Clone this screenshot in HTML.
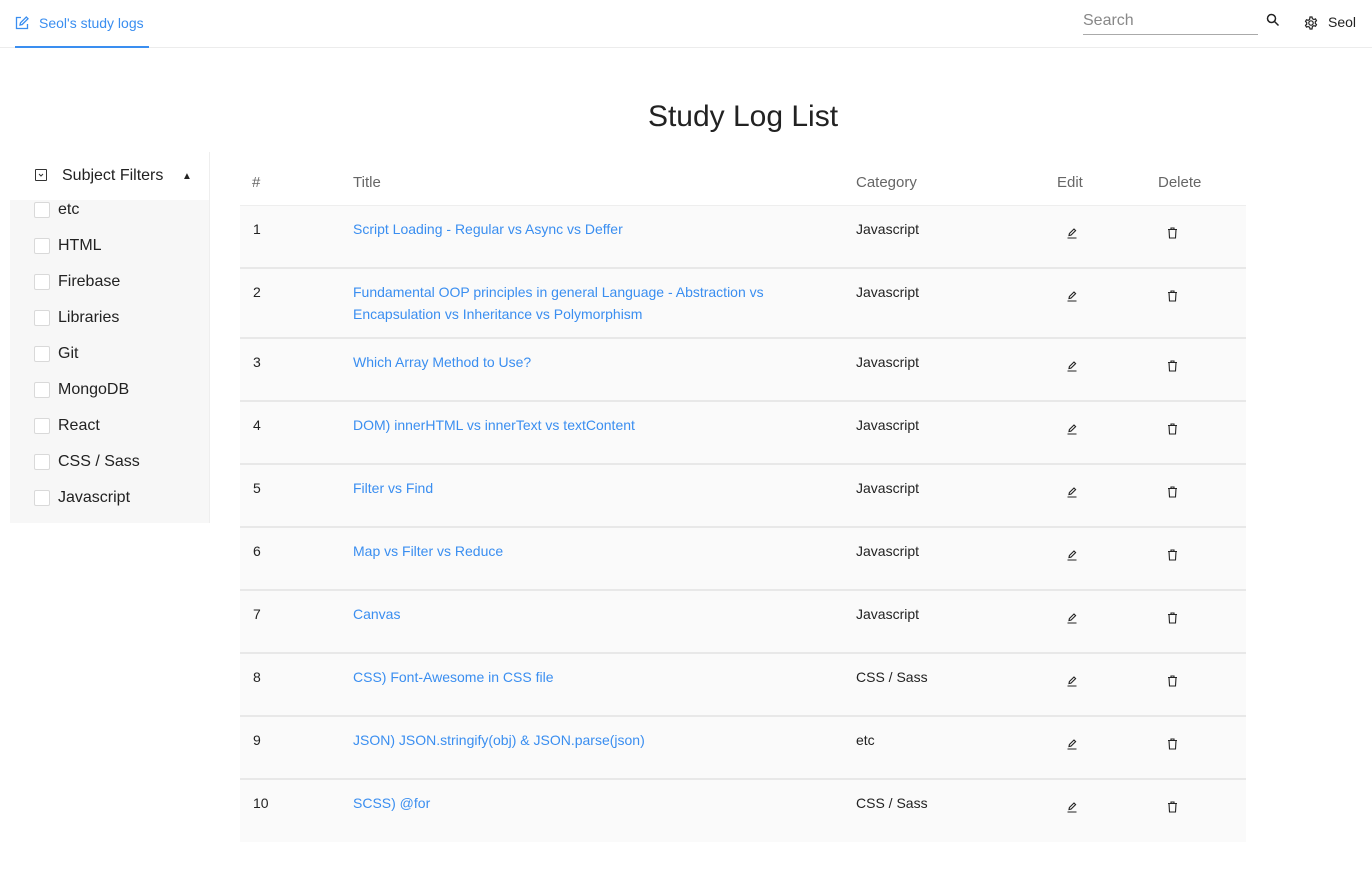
<!DOCTYPE html>
<html><head><meta charset="utf-8"><style>
*{box-sizing:border-box;margin:0;padding:0}
body{width:1372px;height:877px;background:#fff;font-family:"Liberation Sans",Helvetica,Arial,sans-serif;color:#222;position:relative;overflow:hidden}
.hdr{position:absolute;left:0;top:0;width:1372px;height:48px;border-bottom:1px solid #ececec}
.brand{position:absolute;left:15px;top:0;height:48px;width:134px;border-bottom:2px solid #3a8ef0;color:#3a8ef0;font-size:14px;line-height:46px;padding-left:24px}
.brand svg{position:absolute;left:0;top:16px}
.search{position:absolute;left:1083px;top:9px;width:175px;height:26px;border-bottom:1px solid #aaa;color:#888;font-size:16px;line-height:24px}
.sicon{position:absolute;left:1266px;top:13px}
.gear{position:absolute;left:1304px;top:16px}
.user{position:absolute;left:1328px;top:14px;font-size:14px}
h1{position:absolute;left:0;width:1486px;top:100px;text-align:center;font-size:30px;font-weight:normal;color:#222}
.side{position:absolute;left:10px;top:152px;width:200px;height:371px;border-right:1px solid #eee}
.sh{height:48px;position:relative;font-size:16px;line-height:48px;padding-left:52px;background:#fff}
.sh .bx{position:absolute;left:25px;top:17px;width:12px;height:12px;border:1px solid #333;border-radius:1px}
.sh .car{position:absolute;left:172px;top:1px;font-size:10px}
.list{background:#f7f7f7;height:323px;padding-top:0}
.it{height:36px;position:relative;font-size:16px;line-height:20px;padding-left:48px}
.it span.c{position:absolute;left:24px;top:2px;width:16px;height:16px;border:1px solid #d9d9d9;border-radius:2px;background:#fff}
table{position:absolute;left:240px;top:160px;width:1006px;border-collapse:collapse;font-size:14px}
th{text-align:left;font-weight:normal;color:#666;font-size:15px;height:45px;border-bottom:1px solid #eee;padding:0}
td{vertical-align:top;padding:12px 0 0 0;background:#fafafa;border-bottom:2px solid #e8e8e8;line-height:22px}
td.a{color:#3a8ef0}
tr.r td{height:63px}
tr.r2 td{height:70px}
svg.ic{margin-top:9px}
</style></head><body>
<div class="hdr">
<div class="brand"><svg width="14" height="14" viewBox="0 0 14 14" fill="none" stroke="#3a8ef0" stroke-width="1.3"><path d="M6 1.5H1.5v11h11V8"/><path d="M5 9l.5-2.2L11.3 1l1.7 1.7-5.8 5.8z"/></svg>Seol's study logs</div>
<div class="search">Search</div>
<svg class="sicon" width="14" height="14" viewBox="0 0 14 14" fill="none" stroke="#222" stroke-width="1.5"><circle cx="5.5" cy="5.5" r="4"/><path d="M8.5 8.5l4 4"/></svg>
<svg class="gear" width="14" height="14" viewBox="0 0 14 14" fill="none" stroke="#222" stroke-width="1.2"><circle cx="7" cy="7" r="2.2"/><path d="M6 1h2l.4 1.7 1.5.8 1.6-.6 1 1.7-1.2 1.2v1.6l1.2 1.2-1 1.7-1.6-.6-1.5.8L8 13H6l-.4-1.7-1.5-.8-1.6.6-1-1.7 1.2-1.2V6.6L1.5 5.4l1-1.7 1.6.6 1.5-.8z"/></svg>
<div class="user">Seol</div>
</div>
<h1>Study Log List</h1>
<div class="side">
<div class="sh"><span class="bx"><svg width="10" height="10" viewBox="0 0 10 10" style="position:absolute;left:0;top:0" fill="none" stroke="#333" stroke-width="1"><path d="M3 4l2 2 2-2"/></svg></span>Subject Filters<span class="car">&#9650;</span></div>
<div class="list">
<div class="it"><span class="c"></span>etc</div>
<div class="it"><span class="c"></span>HTML</div>
<div class="it"><span class="c"></span>Firebase</div>
<div class="it"><span class="c"></span>Libraries</div>
<div class="it"><span class="c"></span>Git</div>
<div class="it"><span class="c"></span>MongoDB</div>
<div class="it"><span class="c"></span>React</div>
<div class="it"><span class="c"></span>CSS / Sass</div>
<div class="it"><span class="c"></span>Javascript</div>
</div></div>
<table>
<colgroup><col style="width:113px"><col style="width:503px"><col style="width:201px"><col style="width:101px"><col style="width:88px"></colgroup>
<tr><th style="padding-left:12px">#</th><th>Title</th><th>Category</th><th>Edit</th><th>Delete</th></tr>
<tr class="r"><td style="padding-left:13px">1</td><td class="a">Script Loading - Regular vs Async vs Deffer</td><td>Javascript</td><td style="padding-left:9px"><svg class="ic" width="12" height="12" viewBox="0 0 12 12" fill="none" stroke="#222" stroke-width="1.1"><path d="M3 8.5l.4-2L8 2l1.6 1.6L5 8.1zM1.5 11h9"/></svg></td><td style="padding-left:9px"><svg class="ic" width="11" height="12" viewBox="0 0 11 12" fill="none" stroke="#222" stroke-width="1.1"><path d="M1 2.5h9M4 2.5V1h3v1.5M2 2.5l.5 8.5h6L9 2.5"/></svg></td></tr>
<tr class="r2"><td style="padding-left:13px">2</td><td class="a">Fundamental OOP principles in general Language - Abstraction vs<br>Encapsulation vs Inheritance vs Polymorphism</td><td>Javascript</td><td style="padding-left:9px"><svg class="ic" width="12" height="12" viewBox="0 0 12 12" fill="none" stroke="#222" stroke-width="1.1"><path d="M3 8.5l.4-2L8 2l1.6 1.6L5 8.1zM1.5 11h9"/></svg></td><td style="padding-left:9px"><svg class="ic" width="11" height="12" viewBox="0 0 11 12" fill="none" stroke="#222" stroke-width="1.1"><path d="M1 2.5h9M4 2.5V1h3v1.5M2 2.5l.5 8.5h6L9 2.5"/></svg></td></tr>
<tr class="r"><td style="padding-left:13px">3</td><td class="a">Which Array Method to Use?</td><td>Javascript</td><td style="padding-left:9px"><svg class="ic" width="12" height="12" viewBox="0 0 12 12" fill="none" stroke="#222" stroke-width="1.1"><path d="M3 8.5l.4-2L8 2l1.6 1.6L5 8.1zM1.5 11h9"/></svg></td><td style="padding-left:9px"><svg class="ic" width="11" height="12" viewBox="0 0 11 12" fill="none" stroke="#222" stroke-width="1.1"><path d="M1 2.5h9M4 2.5V1h3v1.5M2 2.5l.5 8.5h6L9 2.5"/></svg></td></tr>
<tr class="r"><td style="padding-left:13px">4</td><td class="a">DOM) innerHTML vs innerText vs textContent</td><td>Javascript</td><td style="padding-left:9px"><svg class="ic" width="12" height="12" viewBox="0 0 12 12" fill="none" stroke="#222" stroke-width="1.1"><path d="M3 8.5l.4-2L8 2l1.6 1.6L5 8.1zM1.5 11h9"/></svg></td><td style="padding-left:9px"><svg class="ic" width="11" height="12" viewBox="0 0 11 12" fill="none" stroke="#222" stroke-width="1.1"><path d="M1 2.5h9M4 2.5V1h3v1.5M2 2.5l.5 8.5h6L9 2.5"/></svg></td></tr>
<tr class="r"><td style="padding-left:13px">5</td><td class="a">Filter vs Find</td><td>Javascript</td><td style="padding-left:9px"><svg class="ic" width="12" height="12" viewBox="0 0 12 12" fill="none" stroke="#222" stroke-width="1.1"><path d="M3 8.5l.4-2L8 2l1.6 1.6L5 8.1zM1.5 11h9"/></svg></td><td style="padding-left:9px"><svg class="ic" width="11" height="12" viewBox="0 0 11 12" fill="none" stroke="#222" stroke-width="1.1"><path d="M1 2.5h9M4 2.5V1h3v1.5M2 2.5l.5 8.5h6L9 2.5"/></svg></td></tr>
<tr class="r"><td style="padding-left:13px">6</td><td class="a">Map vs Filter vs Reduce</td><td>Javascript</td><td style="padding-left:9px"><svg class="ic" width="12" height="12" viewBox="0 0 12 12" fill="none" stroke="#222" stroke-width="1.1"><path d="M3 8.5l.4-2L8 2l1.6 1.6L5 8.1zM1.5 11h9"/></svg></td><td style="padding-left:9px"><svg class="ic" width="11" height="12" viewBox="0 0 11 12" fill="none" stroke="#222" stroke-width="1.1"><path d="M1 2.5h9M4 2.5V1h3v1.5M2 2.5l.5 8.5h6L9 2.5"/></svg></td></tr>
<tr class="r"><td style="padding-left:13px">7</td><td class="a">Canvas</td><td>Javascript</td><td style="padding-left:9px"><svg class="ic" width="12" height="12" viewBox="0 0 12 12" fill="none" stroke="#222" stroke-width="1.1"><path d="M3 8.5l.4-2L8 2l1.6 1.6L5 8.1zM1.5 11h9"/></svg></td><td style="padding-left:9px"><svg class="ic" width="11" height="12" viewBox="0 0 11 12" fill="none" stroke="#222" stroke-width="1.1"><path d="M1 2.5h9M4 2.5V1h3v1.5M2 2.5l.5 8.5h6L9 2.5"/></svg></td></tr>
<tr class="r"><td style="padding-left:13px">8</td><td class="a">CSS) Font-Awesome in CSS file</td><td>CSS / Sass</td><td style="padding-left:9px"><svg class="ic" width="12" height="12" viewBox="0 0 12 12" fill="none" stroke="#222" stroke-width="1.1"><path d="M3 8.5l.4-2L8 2l1.6 1.6L5 8.1zM1.5 11h9"/></svg></td><td style="padding-left:9px"><svg class="ic" width="11" height="12" viewBox="0 0 11 12" fill="none" stroke="#222" stroke-width="1.1"><path d="M1 2.5h9M4 2.5V1h3v1.5M2 2.5l.5 8.5h6L9 2.5"/></svg></td></tr>
<tr class="r"><td style="padding-left:13px">9</td><td class="a">JSON) JSON.stringify(obj) &amp; JSON.parse(json)</td><td>etc</td><td style="padding-left:9px"><svg class="ic" width="12" height="12" viewBox="0 0 12 12" fill="none" stroke="#222" stroke-width="1.1"><path d="M3 8.5l.4-2L8 2l1.6 1.6L5 8.1zM1.5 11h9"/></svg></td><td style="padding-left:9px"><svg class="ic" width="11" height="12" viewBox="0 0 11 12" fill="none" stroke="#222" stroke-width="1.1"><path d="M1 2.5h9M4 2.5V1h3v1.5M2 2.5l.5 8.5h6L9 2.5"/></svg></td></tr>
<tr class="r"><td style="padding-left:13px;border-bottom:0">10</td><td class="a" style="border-bottom:0">SCSS) @for</td><td style="border-bottom:0">CSS / Sass</td><td style="padding-left:9px;border-bottom:0"><svg class="ic" width="12" height="12" viewBox="0 0 12 12" fill="none" stroke="#222" stroke-width="1.1"><path d="M3 8.5l.4-2L8 2l1.6 1.6L5 8.1zM1.5 11h9"/></svg></td><td style="padding-left:9px;border-bottom:0"><svg class="ic" width="11" height="12" viewBox="0 0 11 12" fill="none" stroke="#222" stroke-width="1.1"><path d="M1 2.5h9M4 2.5V1h3v1.5M2 2.5l.5 8.5h6L9 2.5"/></svg></td></tr>
</table>
</body></html>
